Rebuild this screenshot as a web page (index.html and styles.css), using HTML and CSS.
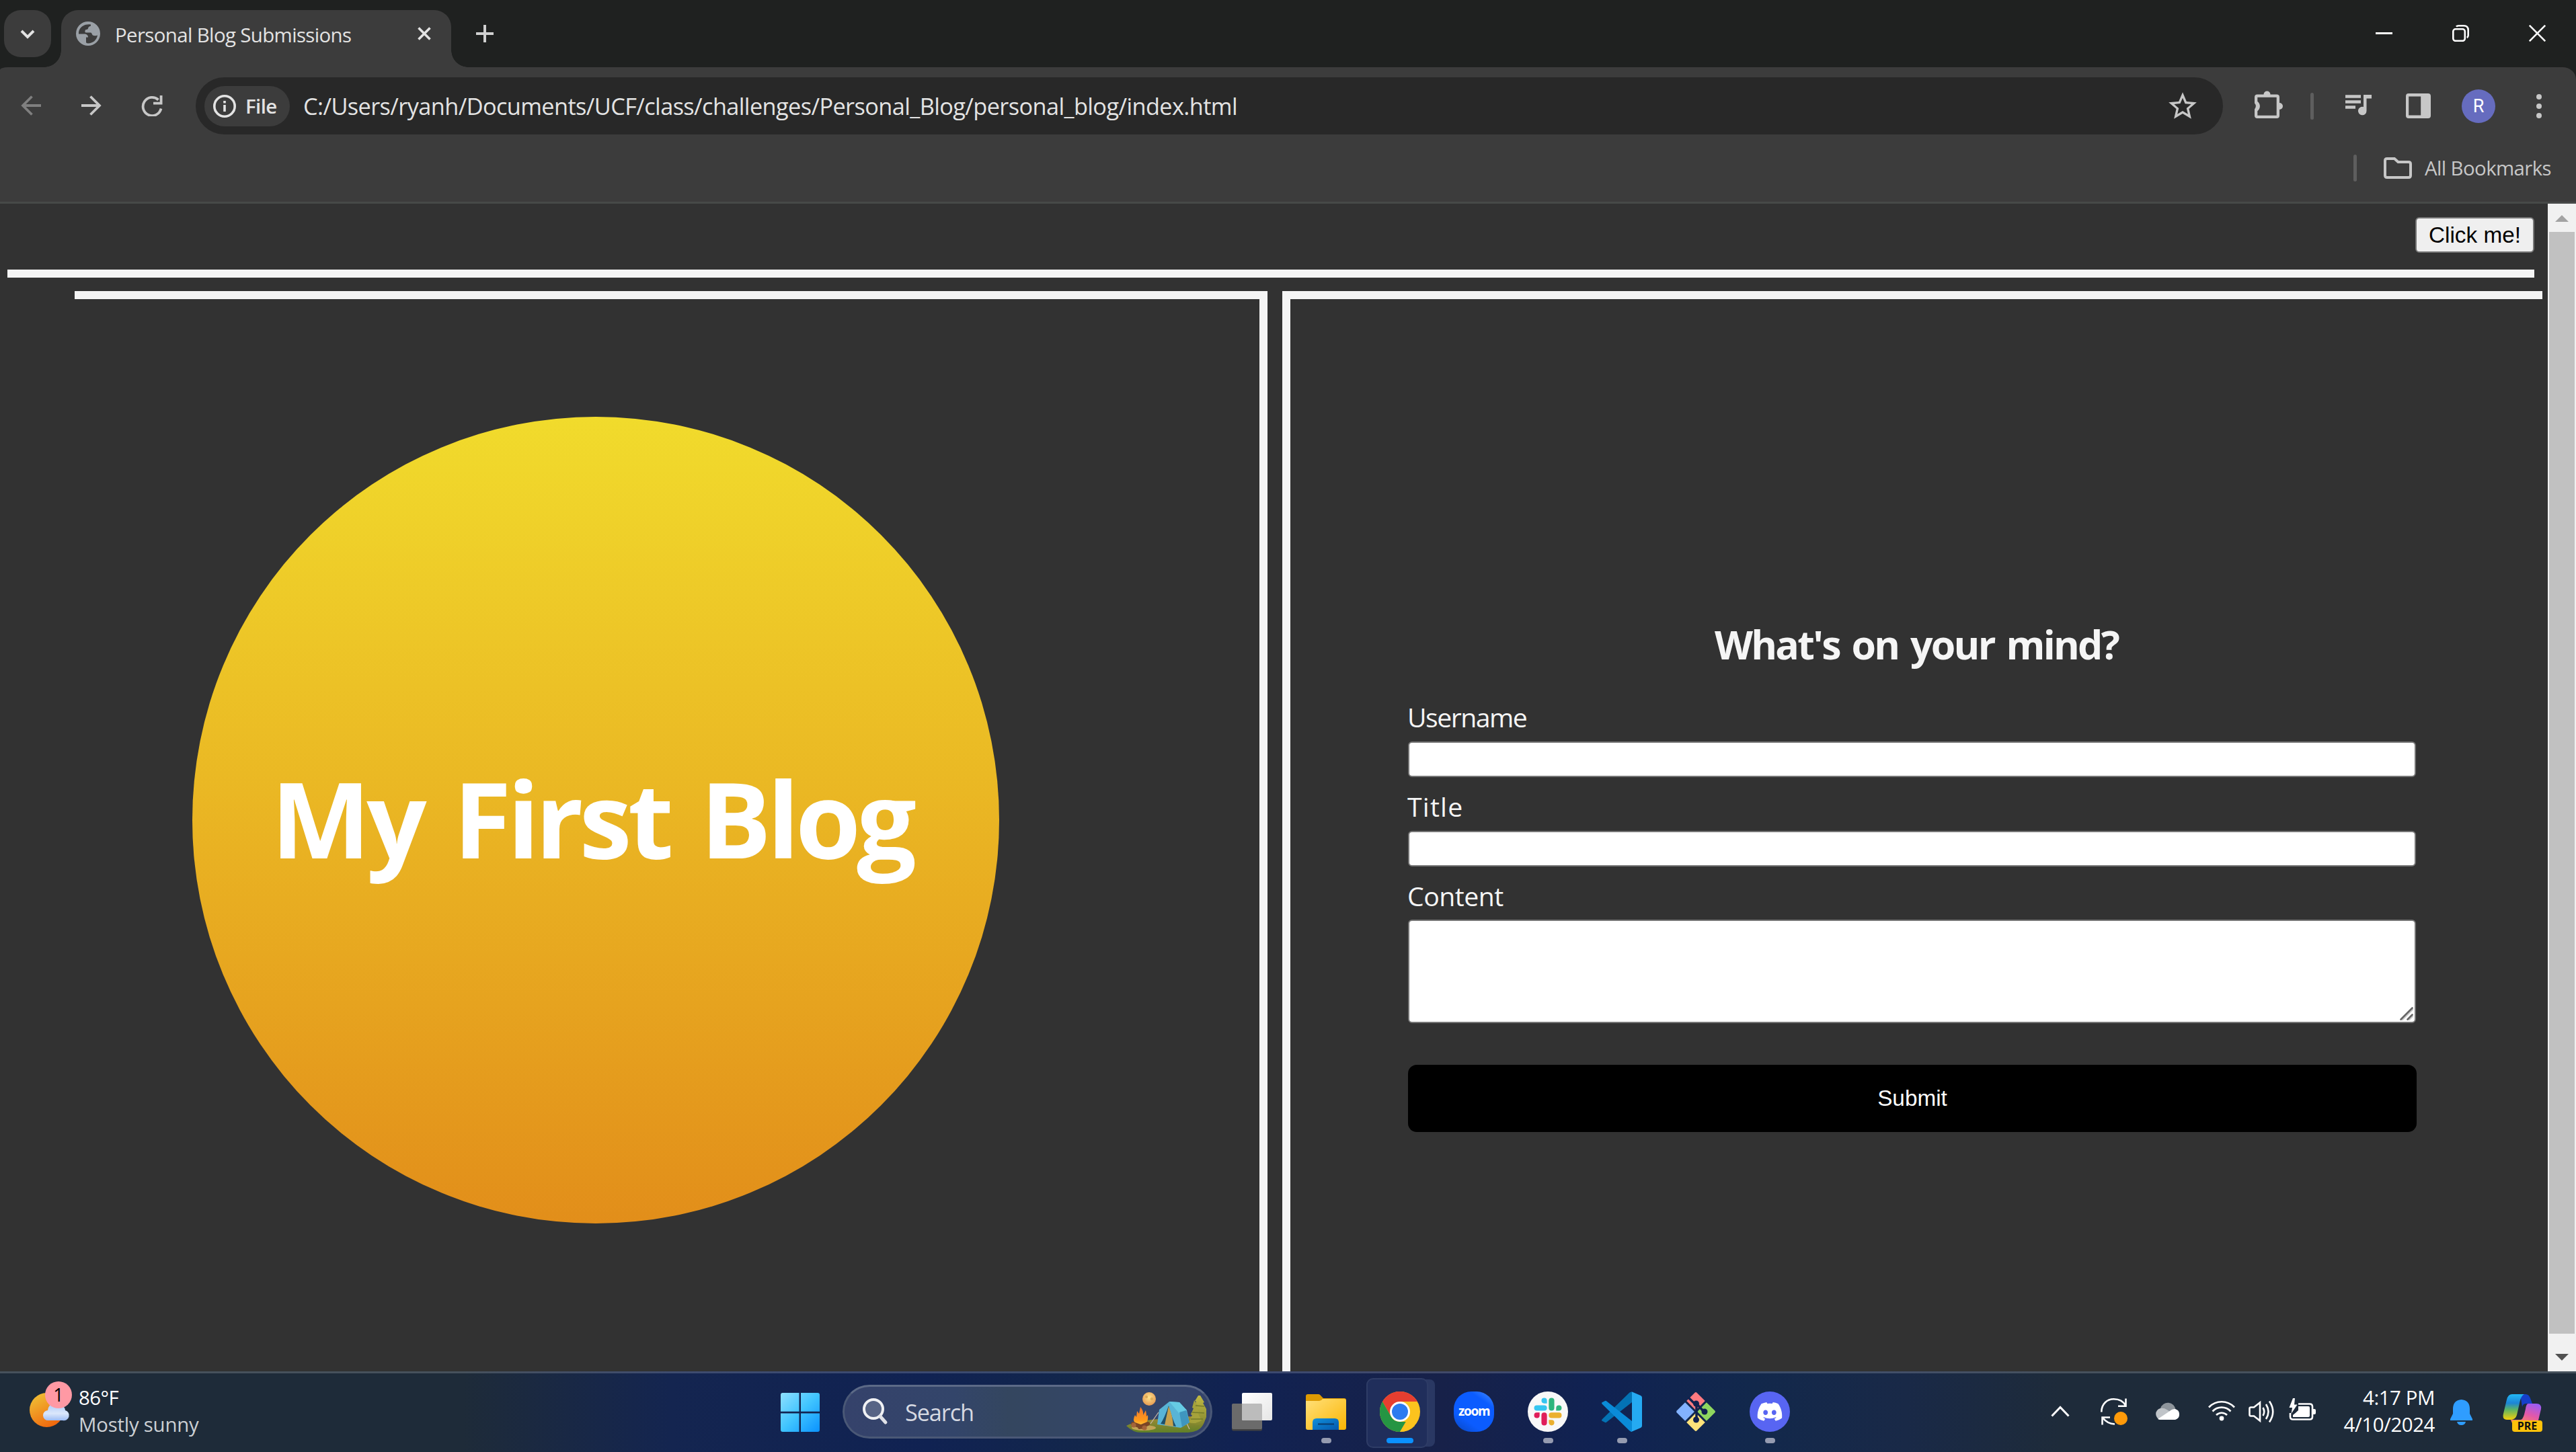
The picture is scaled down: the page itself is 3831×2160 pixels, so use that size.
FILE: index.html
```
<!DOCTYPE html>
<html lang="en">
<head>
<meta charset="utf-8">
<title>Personal Blog Submissions</title>
<link rel="stylesheet" href="styles.css">
</head>
<body>
<header class="tabstrip">
  <button class="tab-search" aria-label="Search tabs"><svg width="30" height="30" viewBox="0 0 30 30"><path d="M6 11l9 9 9-9" fill="none" stroke="#e3e3e3" stroke-width="4"/></svg></button>
  <div class="tab">
    <svg class="favicon" width="36" height="36" viewBox="0 0 36 36"><circle cx="18" cy="18" r="18" fill="#9aa0a6"/><path d="M22 4.500c-8-1-14 2-17 8-1 2-1 4-1 6h8c4 0 6 2 6 5h-3v7c0 1 1 2 3 2 7 0 13-5 14-12-2 1-5 1-7 0-2-2-1-4-4-4h-6c-2 0-2-2-1-4 1-1 3 0 4-2 0-2 1-3 4-4z" fill="#3c3c3c"/></svg>
    <span class="tab-title">Personal Blog Submissions</span>
    <svg class="tab-close" width="20" height="20" viewBox="0 0 20 20"><path d="M1.500 1.500l17 17M18.500 1.500l-17 17" stroke="#e3e3e3" stroke-width="3.600"/></svg>
  </div>
  <svg class="new-tab" width="26" height="26" viewBox="0 0 26 26"><path d="M13 0v26M0 13h26" stroke="#d0d0d0" stroke-width="4"/></svg>
  <div class="window-controls">
    <svg width="25" height="25" viewBox="0 0 25 25"><path d="M0 12.500h25" stroke="#fff" stroke-width="3"/></svg>
    <svg width="25" height="25" viewBox="0 0 25 25"><rect x="1.300" y="6.300" width="17.500" height="17.500" rx="3.500" fill="none" stroke="#fff" stroke-width="2.600"/><path d="M6 2.600Q7 1.300 9.500 1.300h7.500q6.700 0 6.700 6.700v7.500q0 2.500-2 3.500" fill="none" stroke="#fff" stroke-width="2.600"/></svg>
    <svg width="25" height="25" viewBox="0 0 25 25"><path d="M.8.8l23.400 23.400M24.200.8L.8 24.200" stroke="#fff" stroke-width="2.600"/></svg>
  </div>
</header>

<div class="chrome">
  <nav class="toolbar">
    <div class="nav-buttons">
      <svg width="30" height="30" viewBox="0 0 30 30"><path d="M30 15H3M16.500 1.500L3 15l13.500 13.500" fill="none" stroke="#7f7f7f" stroke-width="3.800"/></svg>
      <svg width="30" height="30" viewBox="0 0 30 30"><path d="M0 15h27M13.500 1.500L27 15 13.500 28.500" fill="none" stroke="#c7c7c7" stroke-width="3.800"/></svg>
      <svg width="32" height="31" viewBox="0 0 32 31"><path d="M29.500 19.500A13.600 13.600 0 1 1 25.500 6.500" fill="none" stroke="#c7c7c7" stroke-width="3.800"/><path d="M31.500 0v13.500H18V9.700h9.700V0z" fill="#c7c7c7"/></svg>
    </div>
    <div class="omnibox">
      <div class="chip">
        <svg width="34" height="34" viewBox="0 0 34 34"><circle cx="17" cy="17" r="15.200" fill="none" stroke="#e3e3e3" stroke-width="3.600"/><path d="M17 15v10M17 9v3.600" stroke="#e3e3e3" stroke-width="3.600"/></svg>
        <span>File</span>
      </div>
      <span class="url">C:/Users/ryanh/Documents/UCF/class/challenges/Personal_Blog/personal_blog/index.html</span>
      <svg class="star" width="50" height="50" viewBox="0 0 24 24"><path d="M22 9.240l-7.190-.620L12 2 9.190 8.630 2 9.240l5.460 4.730L5.820 21 12 17.270 18.180 21l-1.630-7.030L22 9.240zM12 15.400l-3.760 2.270 1-4.280-3.320-2.880 4.380-.380L12 6.100l1.710 4.040 4.380.380-3.320 2.880 1 4.280L12 15.400z" fill="#c7c7c7"/></svg>
    </div>
    <div class="tools">
      <svg width="42" height="41" viewBox="0 0 42 41"><path d="M13.500 5.500a5 5 0 0 1 10 0H33q4 0 4 4v8.500a5 5 0 0 1 0 10V37q0 4-4 4H4q-4 0-4-4v-9.500a6.500 6.500 0 0 0 0-9V9.500q0-4 4-4zM4.300 9.800v6a9 9 0 0 1 0 14.400v6.500h28.400V9.800z" fill="#c7c7c7" fill-rule="evenodd"/></svg>
      <i class="sep"></i>
      <svg width="40" height="31" viewBox="0 0 40 31"><path d="M0 2.500h23M0 10.500h23M0 18.500h15" stroke="#c7c7c7" stroke-width="4.400"/><path d="M27 0h12v5.500h-7.500V24a6.300 6.300 0 1 1-4.500-6z" fill="#c7c7c7"/></svg>
      <svg width="37" height="37" viewBox="0 0 37 37"><path d="M4 0h29q4 0 4 4v29q0 4-4 4H4q-4 0-4-4V4q0-4 4-4zm.2 4.500v28h18v-28z" fill="#c7c7c7" fill-rule="evenodd"/></svg>
      <span class="avatar">R</span>
      <svg width="8" height="36" viewBox="0 0 8 36"><circle cx="4" cy="4" r="4" fill="#c7c7c7"/><circle cx="4" cy="18" r="4" fill="#c7c7c7"/><circle cx="4" cy="32" r="4" fill="#c7c7c7"/></svg>
    </div>
  </nav>
  <div class="bookmarks">
    <i class="sep"></i>
    <svg width="42" height="32" viewBox="0 0 42 32"><path d="M2 5q0-3 3-3h11l5.500 5H37q3 0 3 3v17q0 3-3 3H5q-3 0-3-3z" fill="none" stroke="#c7c7c7" stroke-width="4"/></svg>
    <span>All Bookmarks</span>
  </div>
</div>

<div class="viewport">
  <div class="page">
    <div class="page-top"><button class="click-me">Click me!</button></div>
    <div class="rule"></div>
    <main class="columns">
      <section class="intro"><div class="sun"><h1>My First Blog</h1></div></section>
      <section class="entry">
        <h2>What's on your mind?</h2>
        <form>
          <label for="username">Username</label>
          <input id="username" type="text">
          <label for="title">Title</label>
          <input id="title" type="text">
          <label for="content">Content</label>
          <div class="area"><textarea id="content"></textarea><svg class="grip" width="20" height="20" viewBox="0 0 20 20"><path d="M3 20L20 3M13 20l7-7" stroke="#ccc" stroke-width="2"/><path d="M1.500 18.500l17-17M11.500 18.500l7-7" stroke="#666" stroke-width="2.600" stroke-linecap="round"/></svg></div>
          <button class="submit" type="button">Submit</button>
        </form>
      </section>
    </main>
  </div>
  <div class="scrollbar"><i class="up"></i><div class="thumb"></div><i class="down"></i></div>
</div>

<footer class="taskbar">
  <div class="weather">
    <div class="weather-icon">
      <svg width="78" height="70" viewBox="0 0 78 70"><defs><linearGradient id="sunfill" x1=".2" y1=".1" x2=".7" y2="1"><stop offset="0" stop-color="#f0b932"/><stop offset="1" stop-color="#f0640c"/></linearGradient><linearGradient id="cloudfill" x1="0" y1="0" x2="0" y2="1"><stop offset="0" stop-color="#a9c8fa"/><stop offset=".6" stop-color="#dbe7fb"/><stop offset="1" stop-color="#9dbcf5"/></linearGradient></defs><circle cx="25.500" cy="42.500" r="25.500" fill="url(#sunfill)"/><path d="M27 58a7.500 7.500 0 0 1-1-15 12 12 0 0 1 21-7 8 8 0 0 1 5 7 7.600 7.600 0 0 1-4 15z" transform="translate(1)" fill="url(#cloudfill)"/></svg>
      <span class="badge">1</span>
    </div>
    <div class="weather-text"><span>86°F</span><span class="muted">Mostly sunny</span></div>
  </div>

  <div class="apps">
    <svg class="start" width="58" height="58" viewBox="0 0 58 58"><defs><linearGradient id="win" x1="0" y1="0" x2="58" y2="58" gradientUnits="userSpaceOnUse"><stop offset="0" stop-color="#8fe0ff"/><stop offset=".5" stop-color="#40c4ff"/><stop offset="1" stop-color="#0a92ff"/></linearGradient></defs><path d="M3 0h24.500v27.800H0V3q0-3 3-3zM30 0h25q3 0 3 3v24.800H30zM0 30.500h27.500V58H3q-3 0-3-3zM30 30.500h28V55q0 3-3 3H30z" fill="url(#win)"/></svg>
    <div class="search">
      <svg width="38" height="40" viewBox="0 0 38 40"><circle cx="16" cy="16" r="14" fill="#8d96ad" fill-opacity=".4" stroke="#f0f1f4" stroke-width="4"/><path d="M26 27l8 9" stroke="#e0e2e8" stroke-width="5" stroke-linecap="round"/></svg>
      <span>Search</span>
      <svg class="camp" width="120" height="60" viewBox="0 0 120 60">
        <defs><radialGradient id="moon" cx=".5" cy=".4" r=".6"><stop offset="0" stop-color="#ffe48c"/><stop offset="1" stop-color="#e59a52"/></radialGradient><linearGradient id="grass" x1="0" y1="0" x2="0" y2="1"><stop offset="0" stop-color="#a38b35"/><stop offset="1" stop-color="#5f8028"/></linearGradient><linearGradient id="fire" x1="0" y1="0" x2="0" y2="1"><stop offset="0" stop-color="#f2742a"/><stop offset=".7" stop-color="#ff9a1c"/><stop offset="1" stop-color="#ffc83c"/></linearGradient><linearGradient id="tree" x1="0" y1="0" x2="0" y2="1"><stop offset="0" stop-color="#c1b944"/><stop offset="1" stop-color="#84882f"/></linearGradient></defs>
        <path d="M0 50Q15 42 50 40q45-6 68-3-3 22-26 23H22Q10 60 0 50z" fill="url(#grass)"/>
        <ellipse cx="26" cy="53" rx="18" ry="4" fill="#c3a457"/>
        <path d="M110 5l6 10-2 1 5 9v12q-2 7-8 11-10 2-17-3l5-11-3-1 5-9-2-1 5-9-2-1 5-8z" fill="url(#tree)"/>
        <path d="M101 12l6 9-2 1 4 9-2 1 5 10q-8 6-19 3l5-11-2-1 4-9-2-1z" fill="#a5a23b"/>
        <path d="M103 20l13 1M98 30l18 1M96 40l18 0" stroke="#737b2a" stroke-width="1.500"/>
        <path d="M48 30L36 47M85 36l9 19" stroke="#c9b8a6" stroke-width="1.300"/>
        <path d="M64 14l15 1 11 12 4 18-13 8-35-5 3-22z" fill="#58b4d6"/>
        <path d="M64 14l15 1 11 12-11 5z" fill="#66cbe4"/><path d="M79 30l4 22 11-7-5-18z" fill="#3f96bf"/>
        <path d="M63 20q-6 18-12 27l23 4q-6-12-11-31z" fill="#1f4f68"/><path d="M63 21l-6 28 13 2q-1-16-7-30z" fill="#c7a14b"/>
        <circle cx="34" cy="10" r="10" fill="url(#moon)"/><circle cx="30" cy="7" r="2" fill="#d9a955"/><circle cx="38" cy="10" r="2.300" fill="#e0b05a"/>
        <path d="M21 22q5 6 4 12l4-7q1 5 1 9l2-2q1 7-2 11l-8 5-9-4q-4-5 0-12l2 3 1-9 3 4q1-5 2-10z" fill="url(#fire)"/>
        <path d="M10 47l14 5M32 47l-12 5" stroke="#7b4526" stroke-width="6" stroke-linecap="round"/><circle cx="11" cy="49" r="3.600" fill="#a4643a"/><circle cx="27" cy="53" r="3.600" fill="#a4643a"/>
      </svg>
    </div>
    <svg class="taskview" width="60" height="58" viewBox="0 0 60 58"><defs><linearGradient id="tv" x1="0" y1="0" x2="1" y2="1"><stop offset="0" stop-color="#fff"/><stop offset="1" stop-color="#e6e6e6"/></linearGradient></defs><rect x="0" y="16.500" width="45" height="40" rx="2" fill="#424242"/><rect x="0" y="16" width="45" height="38" rx="2" fill="#6b6b6b"/><rect x="15" y="0" width="45" height="41" rx="2" fill="url(#tv)"/><path d="M15 16h28q2 0 2 2v23H17q-2 0-2-2z" fill="#bcbcbc"/></svg>

    <div class="app open"><svg width="60" height="60" viewBox="0 0 60 60"><defs><linearGradient id="fold" x1="0" y1="0" x2="1" y2="1"><stop offset="0" stop-color="#ffe07a"/><stop offset="1" stop-color="#fbb503"/></linearGradient><linearGradient id="fblue" x1="0" y1="0" x2="1" y2="1"><stop offset="0" stop-color="#1090dc"/><stop offset="1" stop-color="#0458ad"/></linearGradient></defs><path d="M0 7q0-3 3-3h16q2 0 4 3l3 3h31q3 0 3 3v8H0z" fill="#dd9a02"/><path d="M0 14h20q3 0 5-3h32q3 0 3 3v40q0 3-3 3H3q-3 0-3-3z" fill="url(#fold)"/><path d="M10 57V46q0-6 6-6h27q6 0 6 6v11z" fill="url(#fblue)"/><path d="M18 48.500h24" stroke="#0a3f73" stroke-width="2.200"/></svg></div>
    <div class="app active"><svg width="60" height="60" viewBox="0 0 60 60"><circle cx="30" cy="30" r="30" fill="#fcc31e"/><path d="M4 15A30 30 0 0 1 56 15H30L17 37.500z" fill="#e63e30"/><path d="M4 15l13 22.500Q21 45 30 45h9.500L30 60A30 30 0 0 1 4 15z" fill="#259543"/><path d="M43 37.500L30 60q14 0 22-9z" fill="#fcc31e"/><circle cx="30" cy="30" r="15" fill="#fff"/><circle cx="30" cy="30" r="12" fill="#2d7bf0"/></svg></div>
    <div class="app"><div class="zoom">zoom</div></div>
    <div class="app open"><svg width="60" height="60" viewBox="0 0 60 60"><circle cx="30" cy="30" r="30" fill="#f8f8f8"/><g transform="translate(9.500 9.500) scale(.333)"><path fill="#35c5f0" d="M45.200 0a12.300 12.300 0 1 0 0 24.600h12.300V12.300A12.300 12.300 0 0 0 45.200 0m0 32.800H12.300a12.300 12.300 0 1 0 0 24.600h32.900a12.300 12.300 0 0 0 0-24.600"/><path fill="#2eb57d" d="M123 45.100a12.300 12.300 0 1 0-24.600 0v12.300h12.300A12.300 12.300 0 0 0 123 45.100m-32.800 0V12.300a12.300 12.300 0 1 0-24.600 0v32.800a12.300 12.300 0 0 0 24.600 0"/><path fill="#ebb02e" d="M77.900 123a12.300 12.300 0 1 0 0-24.600H65.600v12.300c0 6.800 5.500 12.300 12.300 12.300m0-32.800h32.900a12.300 12.300 0 0 0 0-24.600H77.900a12.300 12.300 0 1 0 0 24.600"/><path fill="#e01e5a" d="M0 77.900a12.300 12.300 0 1 0 24.600 0V65.600H12.300A12.300 12.300 0 0 0 0 77.900m32.800 0v32.900a12.300 12.300 0 1 0 24.600 0V77.900a12.300 12.300 0 0 0-24.600 0"/></g></svg></div>
    <div class="app open"><svg width="60" height="60" viewBox="0 0 60 60"><path d="M1 41q-2 2 0 3l4 2q1 1 3-1l37-29V1q-2-1-4 1z" fill="#0372b4"/><path d="M1 19q-2-2 0-3l4-2q1-1 3 1l37 29v16q-2 0-4-2z" fill="#0a8bd8"/><path d="M44 0l14 6q2 1 2 3v42q0 2-2 3l-14 6q1 0 1-3V3q0-3-1-3z" fill="#25aaf2"/></svg></div>
    <div class="app"><svg width="60" height="60" viewBox="0 0 60 60"><g transform="translate(30 30) rotate(45)"><path d="M-21-19q0-2 2-2H-1.500v19.500H-21z" fill="#ff7a80"/><path d="M1.500-21H19q2 0 2 2v17.500H1.500z" fill="#8fd65f"/><path d="M1.500 1.500H21V19q0 2-2 2H1.500z" fill="#ffe27a"/><path d="M-21 1.500h19.500V21H-19q-2 0-2-2z" fill="#83b2ff"/></g><path d="M19 9l12 12v20M31 18l11 12" stroke="#11214f" stroke-width="3.500" fill="none"/><circle cx="30.500" cy="18" r="4.500" fill="#11214f"/><circle cx="43" cy="30" r="4.500" fill="#11214f"/><circle cx="30.500" cy="42" r="4.500" fill="#11214f"/></svg></div>
    <div class="app open"><svg width="60" height="60" viewBox="0 0 60 60"><circle cx="30" cy="30" r="30" fill="#5865f2"/><path d="M42.500 18.200A31 31 0 0 0 34.700 16l-1 2a29 29 0 0 0-7.400 0l-1-2a31 31 0 0 0-7.800 2.300C12.600 25.500 11.200 32.500 11.900 39.400c3 2.200 6.200 3.500 9.400 4.300l2-3.300-3-1.500.7-.6a22 22 0 0 0 18 0l.7.600-3 1.500 2 3.300c3.200-.8 6.400-2.100 9.400-4.300.8-8-1.400-15-5.600-21.200zM23.700 35c-1.900 0-3.400-1.700-3.400-3.800s1.500-3.800 3.400-3.800 3.500 1.700 3.400 3.800c0 2.100-1.500 3.800-3.400 3.800zm12.600 0c-1.900 0-3.400-1.700-3.400-3.800s1.500-3.800 3.400-3.800 3.500 1.700 3.400 3.800c0 2.100-1.500 3.800-3.400 3.800z" fill="#fff"/></svg></div>
  </div>

  <div class="tray">
    <svg width="28" height="40" viewBox="0 0 28 40"><path d="M1.500 26.500L14 13.500l12.500 13" fill="none" stroke="#fff" stroke-width="3"/></svg>
    <svg class="sync" width="40" height="40" viewBox="0 0 40 40"><path d="M1.300 20.500C1.300 8 10 1.300 19.500 1.300 28 1.300 34 5 37 11M37.500.5v11.300H26M2.500 39.500V28.500H14M3.500 29.500Q10 38 21 38.500" fill="none" stroke="#fff" stroke-width="2.600"/><circle cx="30" cy="30" r="10" fill="#ff9a09"/></svg>
    <svg width="40" height="40" viewBox="0 0 40 40"><path d="M9 15a11.500 11.500 0 0 1 22.500 2L20 26z" fill="#8e959c"/><path d="M9 15q5-1 9.500 2L30 24 12 32H9A8.700 8.700 0 0 1 9 15z" fill="#c0c4c8"/><path d="M5 31L23 19q3-3 8-3a8.300 8.300 0 0 1 0 16H9q-2 0-4-1z" fill="#fff"/></svg>
    <svg width="40" height="40" viewBox="0 0 40 40"><g fill="none" stroke="#fff" stroke-width="2.700"><path d="M1 13.500a26 26 0 0 1 38 0"/><path d="M6.500 19.500a18.500 18.500 0 0 1 27 0"/><path d="M12 25a11.500 11.500 0 0 1 16 0"/></g><circle cx="20" cy="30" r="3.400" fill="#fff"/></svg>
    <svg class="gap-s" width="40" height="40" viewBox="0 0 40 40"><g fill="none" stroke="#fff" stroke-width="2.600"><path d="M1.500 15.500q0-2 2-2H8l9-7v27l-9-7H3.500q-2 0-2-2zM21.500 14q3.500 6 0 12M26 9q7 11 0 22M31 4.500q10.500 15.500 0 31"/></g></svg>
    <svg class="gap-s" width="40" height="40" viewBox="0 0 40 40"><path d="M14 8.500h17q4 0 4 4v15q0 4-4 4H6q-4 0-4-4V22" fill="none" stroke="#fff" stroke-width="2.600"/><path d="M36 16h2q2 0 2 2v4q0 2-2 2h-2zM14 12h15q2 0 2 2v12q0 2-2 2H6v-3q4-3 8-7z" fill="#fff"/><path d="M6 0L.5 14H5L3.500 23 12.500 9.500H8L9 0z" fill="#fff"/></svg>
    <div class="clock"><span class="time">4:17 PM</span><span class="date">4/10/2024</span></div>
    <svg class="bell" width="33" height="38" viewBox="0 0 33 38"><path d="M16.500 0Q29 1 29 14v7l4 8v2H0v-2l4-8v-7Q4 1 16.500 0zM10 33h13q-1 5-6.500 5T10 33z" fill="#2f9dff"/></svg>
    <div class="copilot">
      <svg width="60" height="60" viewBox="0 0 60 60"><defs><linearGradient id="cp1" x1="0" y1="0" x2="0" y2="1"><stop offset="0" stop-color="#22b8f5"/><stop offset=".35" stop-color="#1c84d6"/><stop offset=".6" stop-color="#5cb464"/><stop offset="1" stop-color="#f5d00a"/></linearGradient><linearGradient id="cp2" x1=".8" y1="0" x2=".3" y2="1"><stop offset="0" stop-color="#9a5cf5"/><stop offset=".5" stop-color="#e458a8"/><stop offset="1" stop-color="#ff9350"/></linearGradient></defs><path d="M26 0h8q5 0 7 6l3 8h-9q-5 0-6 5z" fill="#153fc9"/><path d="M14 0h18q-4 2-6 9l-5 22q-2 7-9 7H6q-7 0-5-9L6 8q2-8 8-8z" fill="url(#cp1)"/><path d="M38 14h12q8 0 7 8l-5 21q-2 3-6 3H20q-6 0-8-8 9 0 15 0 3-1 5-8l2-8q1-8 4-8z" fill="url(#cp2)"/></svg>
      <span class="pre">PRE</span>
    </div>
  </div>
</footer>
</body>
</html>
```
FILE: styles.css
```
* { box-sizing: border-box; }
body {
  margin: 0; width: 3831px; height: 2160px; overflow: hidden;
  display: flex; flex-direction: column;
  background: #323232; color: #e3e3e3;
  font-family: "Open Sans", "Noto Sans", sans-serif;
  white-space: nowrap;
}
svg { display: block; flex: none; }
button { font-family: "Liberation Sans", Arial, sans-serif; padding: 0; }

/* Tab strip */
.tabstrip { height: 100px; background: #1f2120; display: flex; align-items: flex-start; padding-left: 6px; }
.tab-search { width: 70px; height: 70px; margin-top: 15px; border: 0; border-radius: 25px; background: #3c3c3c; display: flex; align-items: center; justify-content: center; }
.tab { position: relative; width: 580px; height: 85px; margin: 15px 0 0 15px; padding: 0 30px 15px 22px; border-radius: 25px 25px 0 0; background: #3c3c3c; display: flex; align-items: center; }
.tab::before, .tab::after { content: ""; position: absolute; bottom: 0; width: 25px; height: 25px; }
.tab::before { left: -25px; background: radial-gradient(circle at 0 0, transparent 24.5px, #3c3c3c 25px); }
.tab::after { right: -25px; background: radial-gradient(circle at 100% 0, transparent 24.5px, #3c3c3c 25px); }
.tab-title { margin-left: 22px; padding-top: 3px; flex: 1; font-size: 29.4px; letter-spacing: -.62px; }
.new-tab { margin: 37px 0 0 37px; }
.window-controls { margin: 37px 45px 0 auto; display: flex; gap: 89px; }

/* Toolbar and bookmarks */
.chrome { height: 203px; background: linear-gradient(#1f2120 30px, #3c3c3c 30px); border-bottom: 3px solid #474948; }
.toolbar { height: 115px; background: #3c3c3c; border-radius: 12px 20px 0 0 / 4px 18px 0 0; display: flex; align-items: center; }
.nav-buttons { display: flex; gap: 59.500px; margin-left: 31px; width: 260px; }
.omnibox { width: 3015px; height: 85px; border-radius: 43px; background: #282828; padding: 0 35px 0 13px; display: flex; align-items: center; }
.chip { width: 127px; height: 60px; border-radius: 30px; background: #3c3c3c; display: flex; align-items: center; padding-left: 13px; }
.chip span { margin-left: 14px; font-size: 29.4px; font-weight: 600; letter-spacing: -.6px; }
.url { margin-left: 20px; flex: 1; font-size: 34.300px; letter-spacing: -.6px; }
.tools { flex: 1; display: flex; align-items: center; padding-left: 47px; }
.sep { width: 5px; height: 40px; border-radius: 3px; background: #5e5e5e; flex: none; }
.tools .sep { margin: 0 47px 0 41px; }
.tools svg:nth-of-type(1) { margin-top: -4px; }
.tools svg:nth-of-type(3) { margin: 0 46px 0 50px; }
.tools svg:nth-of-type(2) { margin-top: -3px; }
.avatar { width: 50px; height: 50px; border-radius: 50%; background: #666cbf; color: #fff; display: flex; align-items: center; justify-content: center; font: 27px Roboto, sans-serif; margin-right: 61px; }
.bookmarks { height: 85px; padding: 0 37px 15px 0; display: flex; align-items: center; justify-content: flex-end; color: #c7c7c7; font-size: 29.400px; letter-spacing: -.6px; }
.bookmarks svg { margin: 0 19px 0 40px; }

/* Page */
.viewport { height: 1737px; display: flex; }
.page { width: 3789px; display: flex; flex-direction: column; overflow: hidden; color: #f5f5f5; }
.page-top { height: 98px; padding: 20px 20px 0 0; display: flex; justify-content: flex-end; align-items: flex-start; }
.click-me { width: 177px; height: 53px; border: 2px solid #767676; border-radius: 6px; background: #efefef; color: #000; font-size: 33.330px; }
.rule { height: 12px; margin: 0 20px 20px 11px; background: #f5f5f5; flex: none; }
.columns { flex: 1; display: flex; gap: 22px; padding: 0 8px 0 111px; }
.intro { width: 1774px; border: solid #f5f5f5; border-width: 12px 12px 0 0; padding: 175px 0 0 175px; }
.sun { width: 1200px; height: 1200px; border-radius: 50%; background: linear-gradient(#f1db2c, #e28e1a); display: flex; align-items: center; justify-content: center; }
h1 { margin: -8px 0 0 -12px; font-size: 157px; font-weight: 700; line-height: 200px; letter-spacing: -6px; word-spacing: 11px; color: #fff; }
.entry { flex: 1; border: solid #f5f5f5; border-width: 12px 0 0 12px; padding-top: 473px; }
h2 { margin: 0 0 39px; font-size: 59px; font-weight: 700; line-height: 80px; letter-spacing: -2.700px; word-spacing: 5px; text-align: center; }
form { width: 1500px; margin-left: 175px; display: flex; flex-direction: column; }
label { margin-left: -1px; font-size: 39.200px; font-weight: 500; line-height: 60px; letter-spacing: -1.500px; }
label[for="title"] { letter-spacing: 1.200px; }
label[for="content"] { letter-spacing: -.5px; }
input { width: 1499px; height: 53px; margin: 6px 0 14px; padding: 0 5px; border: 2px solid #767676; border-radius: 6px; background: #fff; }
.area { position: relative; width: 1499px; height: 154px; margin: 5px 0 62px; }
textarea { display: block; width: 100%; height: 100%; border: 2px solid #767676; border-radius: 6px; resize: none; background: #fff; }
.grip { position: absolute; right: 4px; bottom: 4px; }
.submit { height: 100px; border: 0; border-radius: 13px; background: #000; color: #fff; font-size: 33.330px; }
.scrollbar { width: 42px; background: #f1f1f1; display: flex; flex-direction: column; align-items: center; }
.up, .down { border: solid transparent; border-width: 0 10.500px 10px; border-bottom-color: #a3a3a3; margin: 17px 0 15px; }
.down { border-width: 10px 10.500px 0; border-top-color: #505050; margin: 30px 0 16px; }
.thumb { width: 38px; flex: 1; background: #c1c1c1; }

/* Taskbar */
.taskbar { height: 120px; display: flex; align-items: flex-start; border-top: 3px solid rgba(255,255,255,.18); background: linear-gradient(90deg, #1e2b39 0, #1e2b39 18%, #142550 26%, #102252 36%, #13274a 43%, #112252 48%, #172149 56%, #102252 62%, #12284c 68%, #192947 74%, #1e2b3a 80%, #1e2b39 100%); background-clip: border-box; background-origin: border-box; }
.weather { width: 1161px; padding: 12px 0 0 44px; display: flex; }
.weather-icon { position: relative; width: 74px; height: 70px; }
.badge { position: absolute; left: 23px; top: 0; width: 40px; height: 40px; border-radius: 50%; background: #ff99a4; color: #000; font-size: 27px; line-height: 40px; text-align: center; }
.weather-text { display: flex; flex-direction: column; margin-left: -1px; font-size: 29.400px; line-height: 40px; color: #fff; letter-spacing: -.6px; padding-top: 4px; }
.muted { color: #ccd0d4; letter-spacing: -.22px; }
.apps { display: flex; }
.start { margin: 29px 34px 0 0; }
.search { width: 550px; height: 80px; margin-top: 17px; border: 3px solid #4a5876; border-top-color: #5c6a87; border-radius: 40px; background: linear-gradient(90deg, #35426b, #33456a 30%, #34465f 45%, #34466a 80%, #34436c); display: flex; align-items: center; padding-left: 27px; }
.search span { margin-left: 25px; font-size: 34.300px; letter-spacing: -1.100px; color: #d6d9e2; }
.camp { margin: 1px 5px 0 auto; }
.taskview { margin: 29px 0 0 29px; }
.app { position: relative; width: 60px; height: 117px; margin-left: 50px; padding-top: 27px; }
.app svg, .zoom { position: relative; }
.open::after, .active::after { content: ""; position: absolute; left: 22.500px; top: 96px; width: 15px; height: 8px; border-radius: 4px; background: #959bb0; }
.active::after { left: 10px; width: 40px; background: #0a91ff; }
.active::before { content: ""; position: absolute; left: -20px; top: 7px; width: 88px; height: 100px; border: 2px solid #2e3c66; border-radius: 10px; background: #202e5b; box-shadow: 12px 0 0 -2px #2a3863; }
.zoom { width: 60px; height: 60px; border-radius: 26px; background: linear-gradient(215deg, #4a90ff, #0b5cff 25%, #0b5cff 70%, #0845bb); color: #fff; font: 700 19px/58px "Noto Sans", sans-serif; letter-spacing: -1.400px; text-align: center; }
.tray { margin-left: auto; padding: 37px 50px 0 0; display: flex; }
.tray > svg { margin-left: 40px; }
.tray > .sync { margin-left: 46px; }
.tray > .gap-s { margin-left: 20px; }
.clock { width: 177px; margin-top: -21px; display: flex; flex-direction: column; align-items: flex-end; font-size: 29.400px; line-height: 40px; letter-spacing: -.420px; color: #fff; }
.tray > .bell { margin: 2px 45px 0 23px; }
.copilot { position: relative; width: 59px; height: 60px; margin-top: -6px; }
.pre { position: absolute; right: 0; top: 39px; width: 45px; height: 17px; border-radius: 4px; background: #ffc20a; color: #111; font: 700 16px/17px "Noto Sans", sans-serif; text-align: center; }
```
